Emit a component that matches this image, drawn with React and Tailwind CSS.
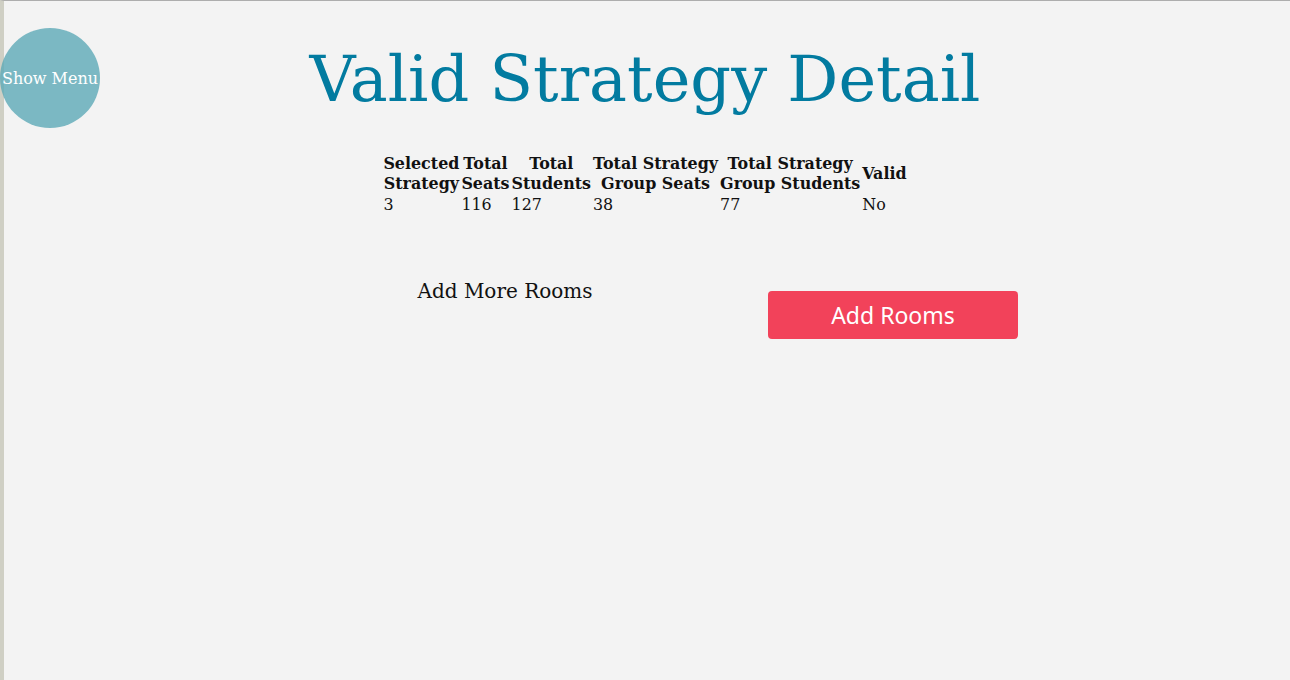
import React from 'react';

const serif = { fontFamily: '"DejaVu Serif", serif' };

const headers = [
  ['Selected', 'Strategy'],
  ['Total', 'Seats'],
  ['Total', 'Students'],
  ['Total Strategy', 'Group Seats'],
  ['Total Strategy', 'Group Students'],
  ['Valid'],
];

const row = ['3', '116', '127', '38', '77', 'No'];

export default function App() {
  return (
    <div
      className="relative min-h-[680px] bg-[#f3f3f3] border-t border-t-[#adadad] border-l-4 border-l-[#cfcfc4] text-[#111]"
      style={serif}
    >
      {/* floating menu toggle */}
      <button className="absolute -left-[4px] top-[27px] w-[100px] h-[100px] pt-[1px] rounded-full bg-[rgb(92,169,182)]/80 text-white text-[16px] flex items-center justify-center whitespace-nowrap">
        Show Menu
      </button>

      <div className="pr-[4px]">
        <h1 className="mt-[41px] text-center text-[63.7px] leading-[75px] text-[#027ba0] font-normal">
          Valid Strategy Detail
        </h1>

        <div className="flex justify-center mt-[35px]">
          <table className="border-separate border-spacing-[2px] text-[15.9px]">
            <thead>
              <tr>
                {headers.map((h, i) => (
                  <th key={i} className="p-0 font-bold text-center align-middle leading-[20px] whitespace-nowrap">
                    {h.map((line, j) => (
                      <div key={j}>{line}</div>
                    ))}
                  </th>
                ))}
              </tr>
            </thead>
            <tbody>
              <tr>
                {row.map((v, i) => (
                  <td key={i} className="p-0 text-left leading-[18px]">{v}</td>
                ))}
              </tr>
            </tbody>
          </table>
        </div>
      </div>

      <div className="flex items-start mt-[63px] pl-[307px]">
        <div className="w-[388px] text-center text-[20px] leading-[24px]">Add More Rooms</div>
        <div className="w-[388px] flex justify-center pt-[12px]">
          <button
            className="w-[250px] h-[48px] rounded-[4px] bg-[#f2425a] text-white text-[23px]"
            style={{ fontFamily: '"Noto Sans", sans-serif' }}
          >
            Add Rooms
          </button>
        </div>
      </div>
    </div>
  );
}
